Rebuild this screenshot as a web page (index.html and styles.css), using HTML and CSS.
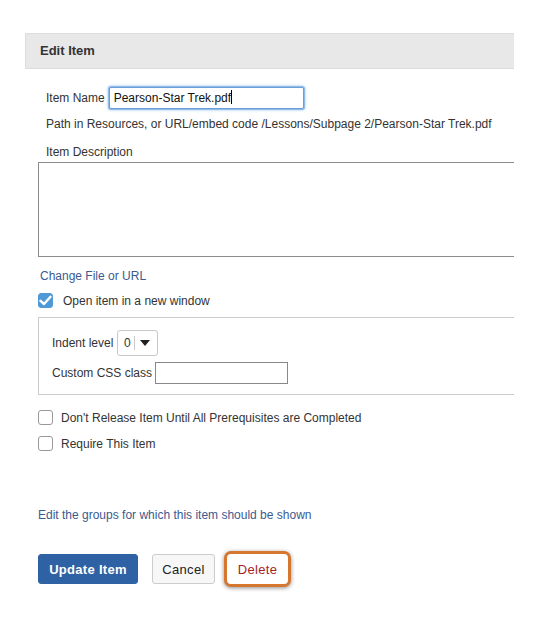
FILE: index.html
```html
<!DOCTYPE html>
<html lang="en">
<head>
  <meta charset="UTF-8">
  <title>Edit Item</title>
  <link rel="stylesheet" href="styles.css">
</head>
<body>
  <div class="panel">
    <div class="panel-head">Edit Item</div>

    <div class="row name-row">
      <label>Item Name</label>
      <div class="text-input focused">Pearson-Star Trek.pdf<span class="caret"></span></div>
    </div>
    <p class="path">Path in Resources, or URL/embed code /Lessons/Subpage 2/Pearson-Star Trek.pdf</p>

    <p class="desc-label">Item Description</p>
    <div class="textarea"></div>

    <a class="link change-link">Change File or URL</a>

    <div class="check-row first">
      <span class="box checked">
        <svg width="13" height="11" viewBox="0 0 13 11"><path d="M1.5 5.8 L5 9 L11.5 1.8" fill="none" stroke="#fff" stroke-width="2.4" stroke-linecap="round" stroke-linejoin="round"/></svg>
      </span>
      <span class="check-text wide">Open item in a new window</span>
    </div>

    <div class="options">
      <div class="row indent-row">
        <label>Indent level</label>
        <div class="select"><span class="val">0</span><span class="arrow"></span></div>
      </div>
      <div class="row css-row">
        <label>Custom CSS class</label>
        <div class="text-input small"></div>
      </div>
    </div>

    <div class="check-row release">
      <span class="box"></span>
      <span class="check-text">Don't Release Item Until All Prerequisites are Completed</span>
    </div>
    <div class="check-row require">
      <span class="box"></span>
      <span class="check-text">Require This Item</span>
    </div>

    <a class="link groups-link">Edit the groups for which this item should be shown</a>

    <div class="buttons">
      <button class="btn primary">Update Item</button>
      <button class="btn cancel">Cancel</button>
      <button class="btn delete">Delete</button>
    </div>
  </div>
</body>
</html>
```

FILE: styles.css
```css
body {
  margin: 0;
  background: #fff;
  font-family: "Liberation Sans", Arial, sans-serif;
  font-size: 12px;
  color: #333;
}
.panel {
  margin-left: 25px;
  padding-top: 33px;
  width: 489px;
  height: 590px;
  overflow: hidden;
}
.panel-head {
  height: 34px;
  line-height: 34px;
  background: #e8e8e8;
  border: 1px solid #dcdcdc;
  border-right: none;
  padding-left: 14px;
  font-size: 13px;
  font-weight: bold;
  color: #333;
}
.row {
  display: flex;
  align-items: center;
}
.name-row {
  margin-top: 18px;
  padding-left: 21px;
}
.name-row label {
  margin-right: 4px;
}
.text-input {
  height: 20px;
  border: 1px solid #999;
  background: #fff;
  font-size: 12px;
  line-height: 20px;
  padding-left: 4px;
  color: #111;
}
.text-input.focused {
  width: 189px;
  border: 1px solid #6a9fd8;
  box-shadow: 0 0 0 1px #8fbbe8, 0 0 3px 1px #9cc4ec;
  border-radius: 2px;
}
.caret {
  display: inline-block;
  width: 1px;
  height: 14px;
  background: #000;
  vertical-align: -2px;
}
.path {
  margin: 8px 0 0 21px;
}
.desc-label {
  margin: 14px 0 0 21px;
}
.textarea {
  margin: 3px 0 0 13px;
  height: 93px;
  width: 520px;
  border: 1px solid #8c8c8c;
}
.link {
  display: block;
  color: #3c5a8f;
  text-decoration: none;
}
.change-link {
  margin: 12px 0 0 15px;
}
.check-row {
  display: flex;
  align-items: center;
  padding-left: 13px;
}
.check-row.first {
  margin-top: 10px;
}
.box {
  width: 13px;
  height: 13px;
  border: 1px solid #999;
  border-radius: 3px;
  background: #fff;
  display: flex;
  align-items: center;
  justify-content: center;
}
.box.checked {
  background: #4f9ad6;
  border-color: #4f9ad6;
}
.check-text {
  margin-left: 8px;
}
.check-text.wide {
  margin-left: 10px;
}
.options {
  margin: 9px 0 0 13px;
  width: 520px;
  height: 76px;
  border: 1px solid #ccc;
}
.indent-row {
  margin-top: 12px;
  padding-left: 13px;
}
.indent-row label {
  margin-right: 4px;
}
.select {
  display: flex;
  align-items: center;
  width: 39px;
  height: 24px;
  border: 1px solid #c8c8c8;
  border-radius: 3px;
}
.select .val {
  width: 14px;
  padding-left: 2px;
  text-align: center;
  border-right: 1px solid #ccc;
  line-height: 14px;
}
.select .arrow {
  margin-left: 5px;
  width: 0;
  height: 0;
  border-left: 5px solid transparent;
  border-right: 5px solid transparent;
  border-top: 6px solid #222;
}
.css-row {
  margin-top: 6px;
  padding-left: 13px;
}
.css-row label {
  margin-right: 3px;
}
.text-input.small {
  width: 131px;
  border-color: #888;
  padding-left: 0;
}
.check-row.release {
  margin-top: 15px;
}
.check-row.require {
  margin-top: 11px;
}
.groups-link {
  margin: 57px 0 0 13px;
}
.buttons {
  display: flex;
  align-items: center;
  margin: 29px 0 0 13px;
}
.btn {
  height: 30px;
  font-family: "Liberation Sans", Arial, sans-serif;
  font-size: 13px;
  border-radius: 3px;
  border: 1px solid #ccc;
  background: #f7f7f7;
  color: #222;
  padding: 0;
  letter-spacing: 0.3px;
}
.btn.primary {
  background: #2f62a4;
  border-color: #2f62a4;
  color: #fff;
  font-weight: bold;
  width: 100px;
  margin-right: 14px;
}
.btn.cancel {
  width: 63px;
  margin-right: 9px;
}
.btn.delete {
  height: 36px;
  width: 67px;
  background: #fff;
  color: #a8231f;
  border: 3px solid #d6772f;
  border-radius: 7px;
  box-shadow: 0 1px 4px rgba(0, 0, 0, 0.45);
}
```
